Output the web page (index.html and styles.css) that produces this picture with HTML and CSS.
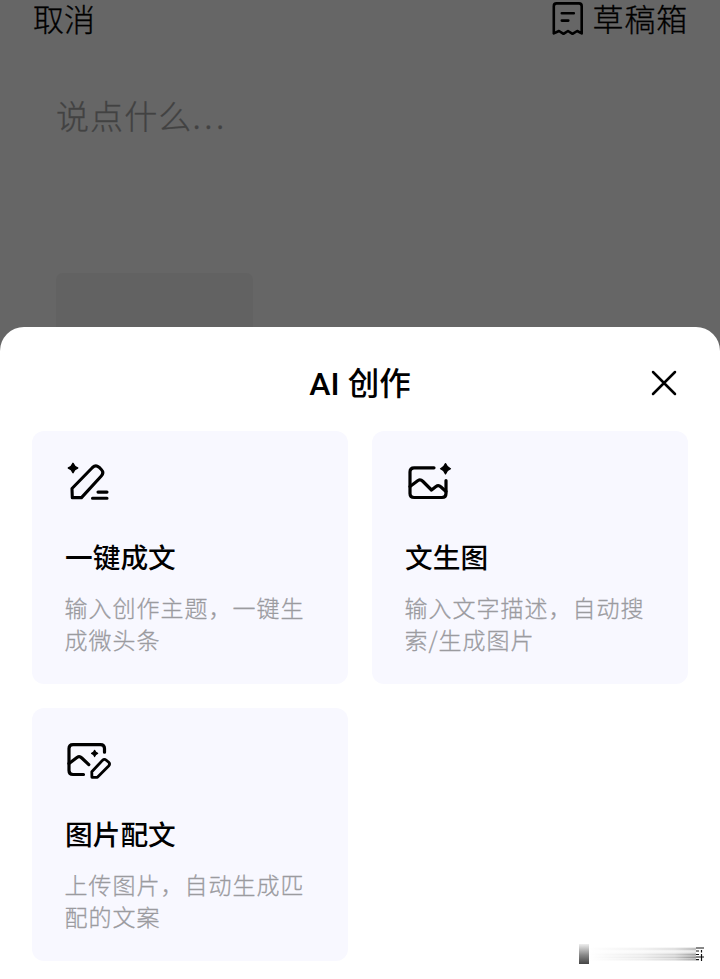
FILE: index.html
```html
<!DOCTYPE html>
<html lang="zh-CN">
<head>
<meta charset="utf-8">
<title>AI 创作</title>
<link rel="stylesheet" href="styles.css">
</head>
<body>
<div class="screen">
  <div class="editor">
    <header class="topbar">
      <span>取消</span>
      <span class="drafts">
        <svg width="32" height="36" viewBox="0 0 32 36" fill="none" stroke="#000" stroke-width="2.6" stroke-linecap="round" stroke-linejoin="round"><path d="M1.8 33.4V6.2Q1.8 3.4 4.5 3.4H27Q29.7 3.4 29.7 6.2V33.4L25.2 31L20.5 33.8L16 31L11.5 33.8L7 31Z"/><path d="M9.8 13.3H21.8M9.8 20.6H16.3"/></svg>
        <span>草稿箱</span>
      </span>
    </header>
    <div class="placeholder">说点什么<span class="dots">...</span></div>
    <div class="upload"></div>
  </div>
  <section class="sheet">
    <div class="sheet-head">
      <h1><span class="latin">AI</span> 创作</h1>
      <svg class="close" width="28" height="28" viewBox="0 0 28 28" fill="none" stroke="#000" stroke-width="2.5" stroke-linecap="round"><path d="M3 3L25 25M25 3L3 25"/></svg>
    </div>
    <div class="cards">
      <article class="card">
        <svg class="icon" width="48" height="42" viewBox="0 0 48 42" fill="none" stroke="#000" stroke-width="3.1" stroke-linecap="round" stroke-linejoin="round"><path d="M7 28.5L27.5 7.5Q30.7 4.5 34 7.2L36.3 9.5Q39.3 12.6 36.3 16L16.5 37.6H7.3Z"/><path d="M33 32.1H42M27.5 38.3H42"/><path d="M8 3.3Q9.2 6.8 12.7 8Q9.2 9.2 8 12.7Q6.8 9.2 3.3 8Q6.8 6.8 8 3.3Z" fill="#000" stroke-width="1.4"/></svg>
        <h2>一键成文</h2>
        <p>输入创作主题，一键生<br>成微头条</p>
      </article>
      <article class="card">
        <svg class="icon" width="48" height="42" viewBox="0 0 48 42" fill="none" stroke="#000" stroke-width="3.2" stroke-linecap="round" stroke-linejoin="round"><path d="M29 7.8H9.2Q5 7.8 5 12V33.5Q5 37.5 9.2 37.5H37Q41 37.5 41 33.5V20.5"/><path d="M5 26.5L13 20.5Q15.5 19 18 21.5L26.5 30L31 26.5Q33.5 24.7 36 27L41 31.5"/><path d="M40.5 3.5Q42 7.5 45.5 8.7Q42 10 40.5 14Q39 10 35.5 8.7Q39 7.5 40.5 3.5Z" fill="#000" stroke-width="1.2"/></svg>
        <h2>文生图</h2>
        <p>输入文字描述，自动搜<br>索/生成图片</p>
      </article>
      <article class="card">
        <svg class="icon" width="48" height="42" viewBox="0 0 48 42" fill="none" stroke="#000" stroke-width="3.2" stroke-linecap="round" stroke-linejoin="round"><path d="M18.5 37.5H8Q4 37.5 4 33.5V11.6Q4 7.6 8 7.6H35.5Q39.5 7.6 39.5 11.6V15.2"/><path d="M4 26.5L12.3 20.3Q14.5 18.8 16.8 21L23.8 27.6"/><path d="M26.8 34.8L37.4 23.4Q39.3 21.5 41.3 23.2L43.7 25.3Q45.4 27 43.6 29L32.4 40.3H26.9Z" stroke-width="2.8"/><path d="M29.6 13.2Q30.3 15.7 32.7 16.4Q30.3 17.1 29.6 19.6Q28.9 17.1 26.5 16.4Q28.9 15.7 29.6 13.2Z" fill="#000" stroke-width="1.1"/></svg>
        <h2>图片配文</h2>
        <p>上传图片，自动生成匹<br>配的文案</p>
      </article>
    </div>
  </section>
  <div class="smudge">
    <div class="smudge-block"></div>
    <div class="smudge-streaks"></div>
    <svg width="8" height="14" viewBox="0 0 8 14" fill="none" stroke="#111" stroke-width="1.2"><path d="M0 1H8M0 4H3M0 7.5H3M0 10H8M0 12.7H3M5.5 3V5.5M5.5 7V14"/></svg>
  </div>
</div>
</body>
</html>
```
FILE: styles.css
```css
* { box-sizing: border-box; }
body {
  margin: 0;
  font-family: "Noto Sans CJK SC", sans-serif;
  color: #000;
}
h1, h2, p { margin: 0; font-weight: 500; }
svg { display: block; flex: none; }
.screen {
  position: relative;
  width: 720px;
  height: 979px;
  overflow: hidden;
  background: #666;
  display: flex;
  flex-direction: column;
}
.editor { height: 327px; flex: none; }
.topbar {
  height: 36px;
  padding: 0 32px 0 33px;
  display: flex;
  justify-content: space-between;
  align-items: center;
  font-size: 31px;
  font-weight: 300;
  line-height: 36px;
  -webkit-text-stroke: .3px #000;
}
.drafts { display: flex; align-items: center; gap: 9px; letter-spacing: .8px; }
.placeholder {
  margin: 55px 0 0 56px;
  height: 48px;
  line-height: 48px;
  font-size: 33px;
  font-weight: 300;
  letter-spacing: 1.1px;
  color: #424242;
  -webkit-text-stroke: .3px #424242;
}
.dots { letter-spacing: 3.6px; }
.upload {
  margin: 134px 0 0 56px;
  width: 197px;
  height: 54px;
  border-radius: 7px 7px 0 0;
  background: #626262;
}
.sheet {
  position: relative;
  flex: 1;
  background: #fff;
  border-radius: 24px 24px 0 0;
  padding: 0 32px;
}
/* Page backdrop continues behind the sheet's rounded corners */
.sheet-head {
  height: 104px;
  display: grid;
  grid-template-columns: 38px 1fr 38px;
  align-items: center;
  padding-top: 8px;
}
h1 {
  grid-column: 2;
  text-align: center;
  font-size: 31.5px;
  line-height: 40px;
  margin-top: -2px;
}
.latin { font-family: Roboto, sans-serif; font-size: 32px; margin-right: 1px; }
.close { justify-self: start; }
.cards {
  display: grid;
  grid-template-columns: 316px 316px;
  grid-auto-rows: 253px;
  gap: 24px;
}
.card {
  background: #f8f8ff;
  border-radius: 12px;
  padding: 29px 30px 0 33px;
}
.icon { margin-bottom: 32px; }
h2 {
  font-size: 27.7px;
  line-height: 44px;
}
p {
  margin-top: 13px;
  font-size: 23px;
  font-weight: 300;
  letter-spacing: 1px;
  line-height: 32px;
  color: #9b9b9f;
  -webkit-text-stroke: .3px #9b9b9f;
  white-space: nowrap;
  margin-left: -.5px;
}
.smudge {
  position: absolute;
  left: 540px;
  top: 944px;
  width: 164px;
  height: 20px;
  display: flex;
  align-items: center;
  padding-left: 39px;
}
.smudge-block {
  width: 10px;
  height: 20px;
  flex: none;
  background: linear-gradient(#eee, #888 55%, #444);
}
.smudge-streaks {
  flex: 1;
  height: 14px;
  background:
    linear-gradient(90deg, #fff, rgba(255, 255, 255, .8) 50%, rgba(255, 255, 255, .55) 80%, transparent),
    linear-gradient(#fff 0, #aaa 14%, #eee 28%, #ddd 42%, #999 55%, #ccc 64%, #888 74%, #ccc 84%, #999 92%, #fff);
}
```
